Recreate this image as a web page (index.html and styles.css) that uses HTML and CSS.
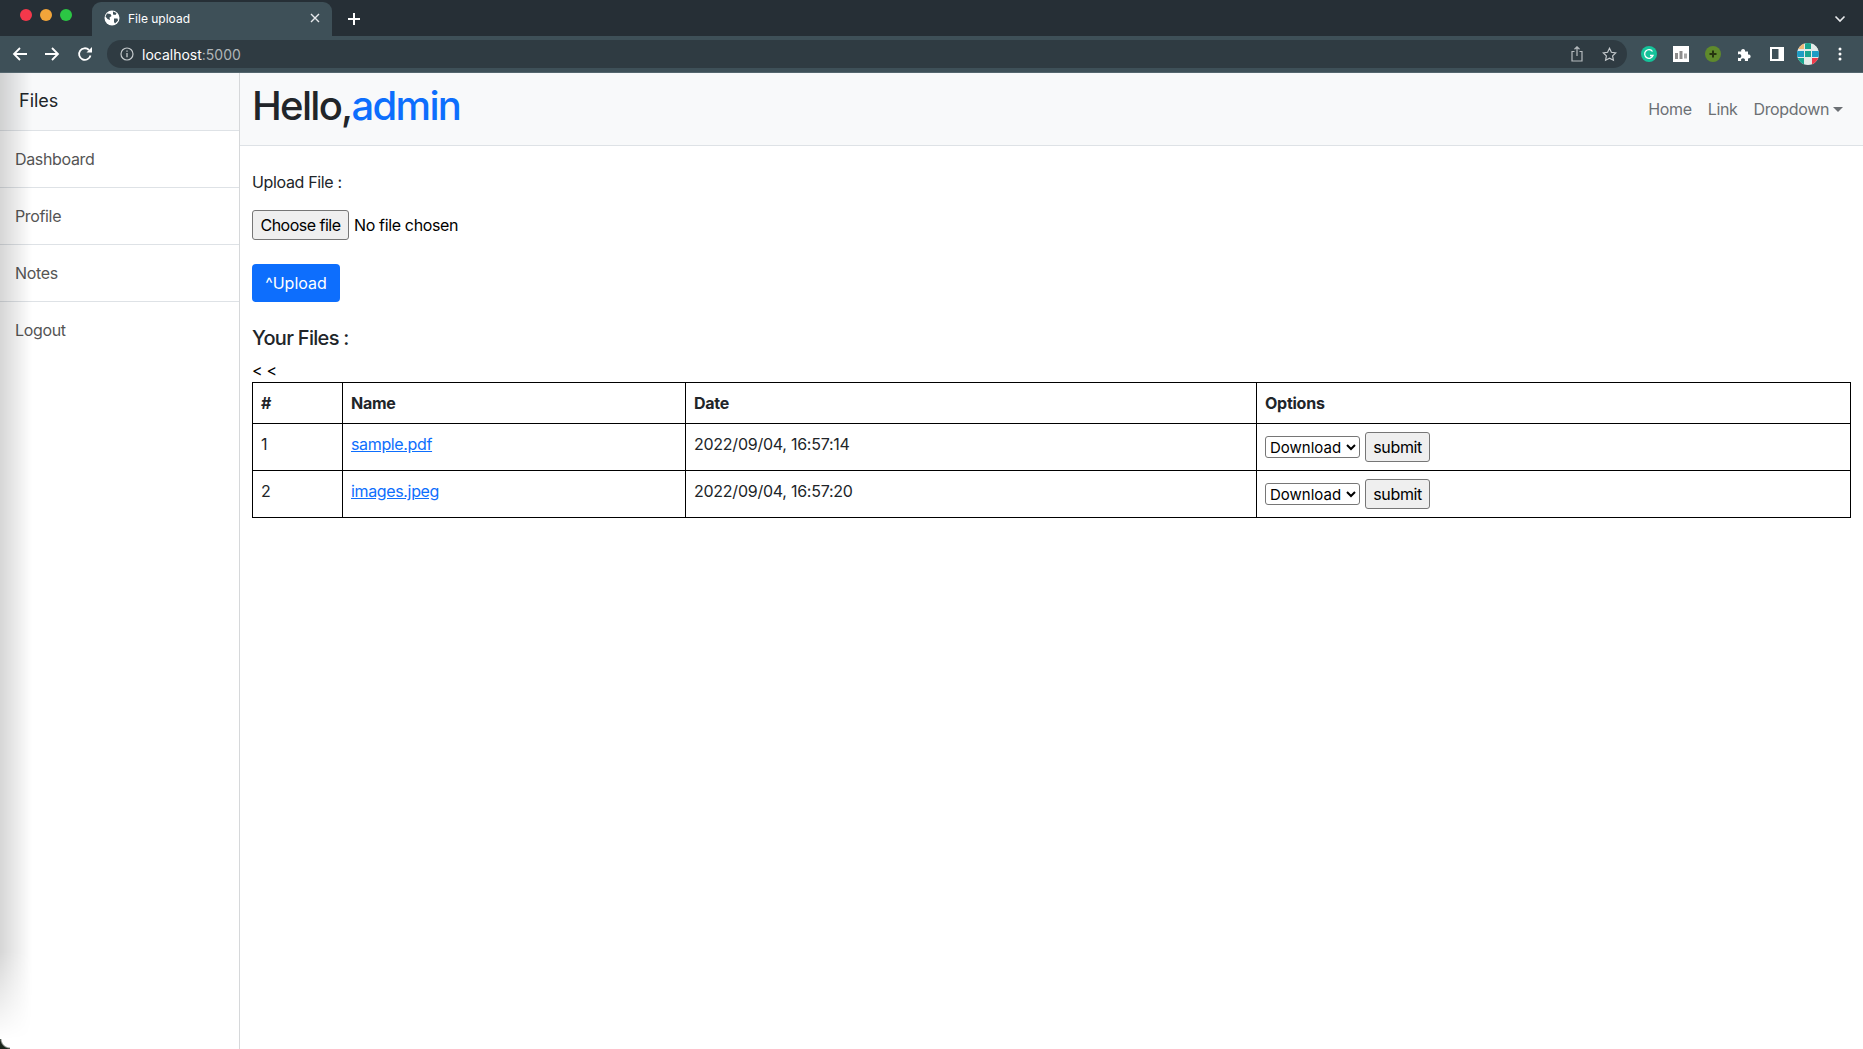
FILE: index.html
```html
<!doctype html>
<html lang="en">
<head>
    <meta charset="UTF-8">
    <title>File upload</title>
    <link rel="stylesheet" href="styles.css">
</head>
<body>
    <div class="tabstrip">
        <div class="lights">
            <span class="light red"></span>
            <span class="light amber"></span>
            <span class="light green"></span>
        </div>
        <div class="tab">
            <svg class="globe" width="16" height="16" viewBox="0 0 16 16">
                <circle cx="8" cy="8" r="7.5" fill="#fff"/>
                <path d="M3 3.5l3.5.5 1 2-2 1.5L6 10 3.5 9 1.5 6.500zM9 1.500l3.500 1.500-1 2-2.500-.5zM10 8.500l3.500 0 .5 2-3 3-1-1.500z" fill="#3e5058"/>
            </svg>
            <span class="tab-title">File upload</span>
            <svg class="tab-close" width="10" height="10" viewBox="0 0 10 10">
                <path d="M1 1l8 8M9 1l-8 8" stroke="#e8eaed" stroke-width="1.400"/>
            </svg>
        </div>
        <svg class="new-tab" width="14" height="14" viewBox="0 0 14 14">
            <path d="M7 1v12M1 7h12" stroke="#fff" stroke-width="2"/>
        </svg>
        <svg class="tab-list" width="12" height="8" viewBox="0 0 12 8">
            <path d="M1.500 1.500L6 6l4.500-4.500" fill="none" stroke="#e8eaed" stroke-width="1.600"/>
        </svg>
    </div>

    <div class="toolbar">
        <div class="nav-btns">
            <svg width="16" height="16" viewBox="0 0 16 16"><path d="M15 8H2M8 2L2 8l6 6" fill="none" stroke="#fff" stroke-width="1.800"/></svg>
            <svg width="16" height="16" viewBox="0 0 16 16"><path d="M1 8h13M8 2l6 6-6 6" fill="none" stroke="#fff" stroke-width="1.800"/></svg>
            <svg class="reload" width="16" height="16" viewBox="0 0 16 16"><path d="M13.500 9.500A5.800 5.800 0 1 1 12 4" fill="none" stroke="#fff" stroke-width="1.800"/><path d="M9.500 6.500H15V1z" fill="#fff"/></svg>
        </div>
        <div class="omnibox">
            <svg width="14" height="14" viewBox="0 0 14 14">
                <circle cx="7" cy="7" r="6" fill="none" stroke="#c4c9cc" stroke-width="1.200"/>
                <path d="M7 6v4.200M7 3.400v1.300" stroke="#c4c9cc" stroke-width="1.300"/>
            </svg>
            <span class="url">localhost<span class="port">:5000</span></span>
            <span class="omni-right">
                <svg width="12" height="16" viewBox="0 0 12 16">
                    <path d="M3.500 5.500H1v9.500h10V5.500H8.500M6 10V1M3.500 3.200L6 .8l2.500 2.400" fill="none" stroke="#b6bbbe" stroke-width="1.200"/>
                </svg>
                <svg width="15" height="15" viewBox="0 0 15 15">
                    <path d="M7.500 1.300l1.900 4 4.300.6-3.100 3 .8 4.300-3.900-2.100-3.900 2.100.8-4.300-3.100-3 4.300-.6z" fill="none" stroke="#c4c9cc" stroke-width="1.200"/>
                </svg>
            </span>
        </div>
        <div class="extensions">
            <svg width="16" height="16" viewBox="0 0 16 16">
                <circle cx="8" cy="8" r="8" fill="#15c39a"/>
                <path d="M11.500 5.500A4.300 4.300 0 1 0 12 9.500H9" fill="none" stroke="#fff" stroke-width="1.300"/>
            </svg>
            <svg width="16" height="16" viewBox="0 0 16 16">
                <rect width="16" height="16" fill="#fff"/>
                <rect x="2" y="7" width="3" height="6" fill="#8d8d8d"/>
                <rect x="6.500" y="5" width="3" height="8" fill="#8d8d8d"/>
                <rect x="11" y="7.500" width="3" height="5" fill="#a8a8a8"/>
            </svg>
            <svg width="16" height="16" viewBox="0 0 16 16">
                <circle cx="8" cy="8" r="8" fill="#5f8a2c"/>
                <path d="M8 4.500v7M4.500 8h7" stroke="#26340f" stroke-width="2"/>
            </svg>
            <svg class="puzzle" width="15" height="15" viewBox="0 0 15 15">
                <path d="M1 4.500h3.200a2 2 0 1 1 3.800 0h3v3a2 2 0 1 1 0 3.800V14H7.800a2 2 0 1 0-3.600 0H1v-3.500a2 2 0 1 0 0-3z" fill="#fff"/>
            </svg>
            <svg width="14" height="14" viewBox="0 0 14 14">
                <path d="M0 0h14v14H0zM2 2v10h6.500V2z" fill="#fff" fill-rule="evenodd"/>
            </svg>
            <svg class="avatar" width="22" height="22" viewBox="0 0 22 22">
                <defs><clipPath id="round"><circle cx="11" cy="11" r="11"/></clipPath></defs>
                <g clip-path="url(#round)">
                    <rect width="22" height="22" fill="#e4ebe9"/>
                    <rect x="0" y="0" width="7" height="6" fill="#f0b878"/>
                    <rect x="8" y="0" width="6" height="6" fill="#1aa58f"/>
                    <rect x="15" y="0" width="7" height="6" fill="#e4ebe9"/>
                    <rect x="0" y="8" width="7" height="6" fill="#1e9cc4"/>
                    <rect x="8" y="8" width="6" height="6" fill="#1aa58f"/>
                    <rect x="15" y="8" width="7" height="6" fill="#1e9cc4"/>
                    <rect x="0" y="15" width="7" height="7" fill="#1aa58f"/>
                    <rect x="15" y="15" width="7" height="7" fill="#ee3a4a"/>
                </g>
            </svg>
            <svg width="4" height="14" viewBox="0 0 4 14">
                <circle cx="2" cy="2" r="1.500" fill="#fff"/>
                <circle cx="2" cy="7" r="1.500" fill="#fff"/>
                <circle cx="2" cy="12" r="1.500" fill="#fff"/>
            </svg>
        </div>
    </div>

    <div class="window">
        <aside class="sidebar">
            <div class="sidebar-head">Files</div>
            <ul class="side-menu">
                <li><a href="#">Dashboard</a></li>
                <li><a href="#">Profile</a></li>
                <li><a href="#">Notes</a></li>
                <li><a href="#">Logout</a></li>
            </ul>
        </aside>
        <div class="page">
            <nav class="navbar">
                <h1 class="hello">Hello,<span class="name">admin</span></h1>
                <ul class="nav-links">
                    <li><a href="#">Home</a></li>
                    <li><a href="#">Link</a></li>
                    <li><a href="#" class="dropdown">Dropdown</a></li>
                </ul>
            </nav>
            <main class="content">
                <form class="upload-form">
                    <label class="upload-label">Upload File :</label>
                    <div class="file-row">
                        <button type="button" class="native-btn choose">Choose file</button>
                        <span>No file chosen</span>
                    </div>
                    <button type="button" class="btn-upload">^Upload</button>
                </form>
                <h2 class="files-title">Your Files :</h2>
                <div class="pager">&lt; &lt;</div>
                <table class="files">
                    <colgroup>
                        <col class="col-num">
                        <col class="col-name">
                        <col class="col-date">
                        <col>
                    </colgroup>
                    <thead>
                        <tr><th>#</th><th>Name</th><th>Date</th><th>Options</th></tr>
                    </thead>
                    <tbody>
                        <tr>
                            <td>1</td>
                            <td><a href="#">sample.pdf</a></td>
                            <td>2022/09/04, 16:57:14</td>
                            <td class="options">
                                <select class="action"><option>Download</option></select>
                                <button type="button" class="native-btn">submit</button>
                            </td>
                        </tr>
                        <tr>
                            <td>2</td>
                            <td><a href="#">images.jpeg</a></td>
                            <td>2022/09/04, 16:57:20</td>
                            <td class="options">
                                <select class="action"><option>Download</option></select>
                                <button type="button" class="native-btn">submit</button>
                            </td>
                        </tr>
                    </tbody>
                </table>
            </main>
        </div>
        <div class="edge-shade"></div>
        <div class="corner"></div>
    </div>
</body>
</html>
```

FILE: styles.css
```css
/* reset */
*{
    margin:0;
    padding:0;
    box-sizing:border-box;
}
ul{
    list-style:none;
}
html,body{
    height:100%;
    overflow:hidden;
}
body{
    display:flex;
    flex-direction:column;
    font-family:Inter,"Liberation Sans",sans-serif;
    font-size:16px;
    letter-spacing:-.35px;
    color:#212529;
    background:#fff;
}

/* browser chrome */
.tabstrip{
    display:flex;
    align-items:flex-end;
    height:36px;
    flex:none;
    background:#262f36;
}
.lights{
    display:flex;
    align-self:flex-start;
    gap:8px;
    width:92px;
    padding:9px 0 0 20px;
}
.light{
    width:12px;
    height:12px;
    border-radius:50%;
}
.red{background:#f4384b;}
.amber{background:#f2a53a;}
.green{background:#2bc744;}
.tab{
    display:flex;
    align-items:center;
    width:240px;
    height:34px;
    padding:0 12px 2px;
    background:#3e5058;
    border-radius:9px 9px 0 0;
    color:#fff;
    font-size:12px;
    letter-spacing:0;
}
.tab-title{
    flex:1;
    margin-left:8px;
}
.new-tab{
    align-self:center;
    margin:2px 0 0 15px;
}
.tab-list{
    align-self:center;
    margin:2px 17px 0 auto;
}
.toolbar{
    display:flex;
    align-items:center;
    height:37px;
    flex:none;
    background:#3e5058;
    border-bottom:1px solid #54666e;
}
.nav-btns{
    display:flex;
    gap:16px;
    width:107px;
    padding-left:12px;
}
.reload{
    margin-left:1px;
}
.omnibox{
    display:flex;
    align-items:center;
    gap:8px;
    width:1520px;
    height:28px;
    padding:0 9px 0 13px;
    background:#2f3b42;
    border-radius:14px;
    color:#fff;
    font-size:14px;
    letter-spacing:0;
}
.port{
    color:#b0b5b8;
}
.omni-right{
    display:flex;
    align-items:center;
    gap:19px;
    margin-left:auto;
    padding-right:1px;
}
.extensions{
    display:flex;
    align-items:center;
    flex:1;
    padding-left:14px;
}
.extensions svg{
    flex:none;
    margin-right:16px;
}
.extensions .puzzle{
    margin-right:18px;
}
.extensions .avatar{
    margin:0 19px 0 -3px;
}

/* page */
.window{
    position:relative;
    display:flex;
    flex:1;
    min-height:0;
}
.sidebar{
    width:240px;
    flex:none;
    border-right:1px solid #d6d8da;
}
.sidebar-head{
    height:58px;
    padding:15px 0 0 19px;
    background:#f8f9fa;
    border-bottom:1px solid #dee2e6;
    font-size:18px;
    line-height:26px;
    letter-spacing:0;
}
.side-menu li{
    height:57px;
    border-bottom:1px solid #dee2e6;
}
.side-menu li:last-child{
    border:none;
}
.side-menu a{
    display:block;
    padding:16px 0 0 15px;
    line-height:24px;
    color:#555;
    text-decoration:none;
}
.page{
    flex:1;
    min-width:0;
}
.navbar{
    display:flex;
    align-items:center;
    justify-content:space-between;
    height:73px;
    padding:0 20px 0 12px;
    background:#f8f9fa;
    border-bottom:1px solid #dee2e6;
}
.hello{
    font-size:40px;
    font-weight:500;
    line-height:48px;
    letter-spacing:-1.7px;
    margin-top:-6px;
}
.name{
    color:#0d6efd;
}
.nav-links{
    display:flex;
    gap:16px;
}
.nav-links a{
    color:#6c7074;
    text-decoration:none;
}
.dropdown::after{
    content:"";
    display:inline-block;
    margin-left:4px;
    vertical-align:3px;
    border-top:5px solid #6c7074;
    border-left:5px solid transparent;
    border-right:5px solid transparent;
}
.content{
    padding:24px 12px 0 12px;
}
.upload-label{
    display:block;
    line-height:24px;
    color:#212529;
}
.file-row{
    display:flex;
    align-items:center;
    gap:5px;
    margin-top:16px;
    color:#000;
}
.native-btn{
    height:30px;
    padding:0 7px;
    border:1px solid #767676;
    border-radius:3px;
    background:#efefef;
    color:#000;
    font:inherit;
    letter-spacing:-.35px;
}
.choose{
    width:97px;
    padding:0;
    letter-spacing:-.5px;
}
.btn-upload{
    display:block;
    width:88px;
    height:38px;
    margin-top:24px;
    border:none;
    border-radius:4px;
    background:#0d6efd;
    color:#fff;
    font:inherit;
    letter-spacing:0;
}
.files-title{
    margin-top:21px;
    font-size:20px;
    font-weight:500;
    line-height:30px;
    letter-spacing:-.7px;
}
.pager{
    margin-top:5px;
    line-height:24px;
    height:24px;
    color:#000;
}
.files{
    width:100%;
    table-layout:fixed;
    border-collapse:collapse;
}
.col-num{width:90px;}
.col-name{width:343px;}
.col-date{width:571px;}
.files th,.files td{
    border:1px solid #000;
    padding:8px;
    text-align:left;
    vertical-align:top;
    line-height:24px;
    letter-spacing:-.25px;
}
.files th{
    font-weight:700;
}
.files a{
    color:#0d6efd;
    letter-spacing:-.35px;
}
.files .options{
    white-space:nowrap;
}
.action{
    width:95px;
    height:22px;
    border:1px solid #767676;
    border-radius:3px;
    background:#fff;
    color:#000;
    font:inherit;
    font-size:15px;
    letter-spacing:0;
    vertical-align:middle;
}
.options .native-btn{
    margin-left:1px;
    vertical-align:middle;
}

/* shadow down the left side of the window */
.edge-shade{
    position:absolute;
    top:0;
    bottom:0;
    left:0;
    width:32px;
    background:linear-gradient(to right,rgba(0,0,0,.16),rgba(0,0,0,0));
    -webkit-mask-image:linear-gradient(to bottom,#000 90%,transparent 99%);
    mask-image:linear-gradient(to bottom,#000 90%,transparent 99%);
    pointer-events:none;
}
.corner{
    position:absolute;
    left:0;
    bottom:0;
    width:10px;
    height:10px;
    background:radial-gradient(circle at top right,transparent 8px,#1b261c 10px);
}
```
